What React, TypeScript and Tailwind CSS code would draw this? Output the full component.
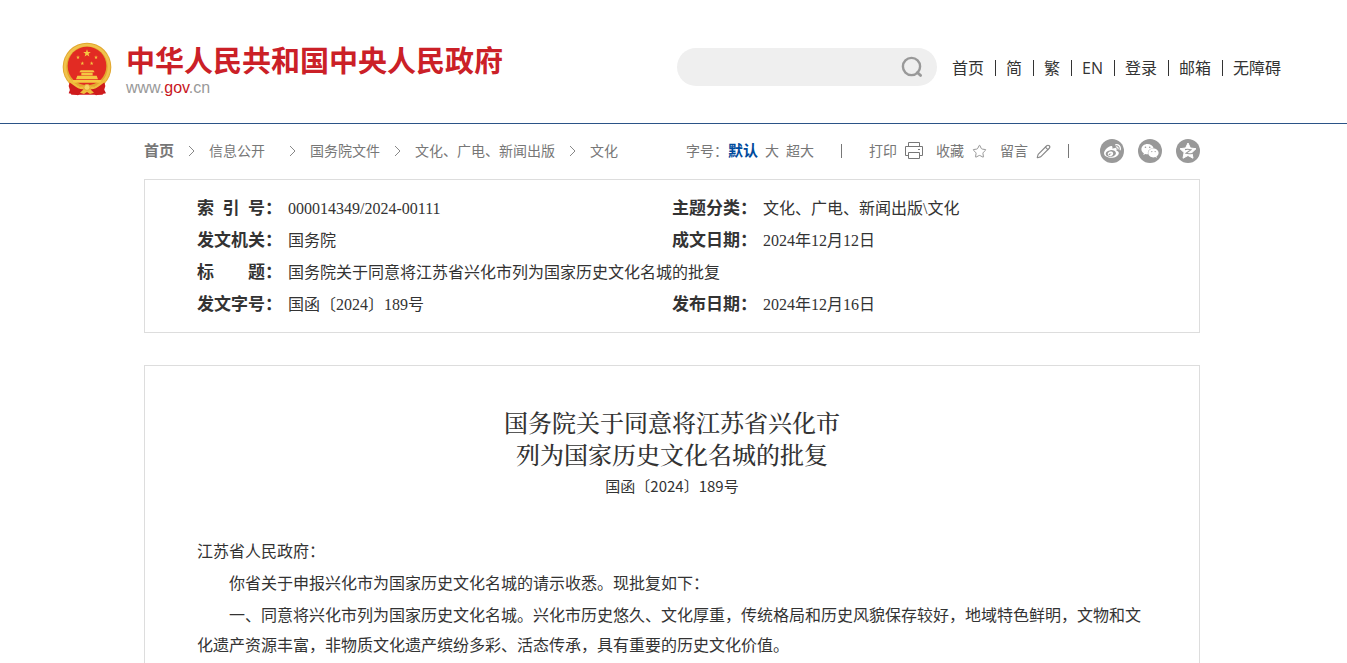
import { Fragment, useState } from 'react'
import { Pencil, Star } from 'lucide-react'
import { FaWeibo, FaWeixin } from 'react-icons/fa'

const navLinks = ['首页', '简', '繁', 'EN', '登录', '邮箱', '无障碍']

const crumbs = [
  { text: '首页', cls: 'text-[15px] font-bold' },
  { text: '信息公开', cls: 'mr-[10px]' },
  { text: '国务院文件', cls: '' },
  { text: '文化、广电、新闻出版', cls: '' },
  { text: '文化', cls: '' },
]

const sizes = ['默认', '大', '超大']

const paragraphs = [
  '你省关于申报兴化市为国家历史文化名城的请示收悉。现批复如下：',
  '一、同意将兴化市列为国家历史文化名城。兴化市历史悠久、文化厚重，传统格局和历史风貌保存较好，地域特色鲜明，文物和文化遗产资源丰富，非物质文化遗产缤纷多彩、活态传承，具有重要的历史文化价值。',
]

function Emblem() {
  const star = 'M0-10 2.4-3.2 9.5-3.1 3.8 1.2 5.9 8.1 0 4-5.9 8.1-3.8 1.2-9.5-3.1-2.4-3.2Z'
  return (
    <svg viewBox="12 12 150 162" className="h-[54px] w-[50px]" aria-hidden="true">
      <path d="M34 128 L38 150 L32 166 L60 172 L74 162 L100 162 L114 172 L144 166 L136 150 L142 128Z" fill="#c8161d" />
      <circle cx="87" cy="87" r="73" fill="#e2a72e" />
      <circle cx="87" cy="87" r="66" fill="none" stroke="#f0c24c" strokeWidth="8" />
      <circle cx="87" cy="84" r="58" fill="#e22b23" />
      <g fill="#f5c842">
        <path d={star} transform="translate(87 46) scale(1.2)" />
        <path d={star} transform="translate(60 58) scale(.6)" />
        <path d={star} transform="translate(114 58) scale(.6)" />
        <path d={star} transform="translate(73 76) scale(.6)" />
        <path d={star} transform="translate(101 76) scale(.6)" />
        <path d="M68 97h38l4 6h-46zM70 104h34v8h-34zM58 113h58l4 11H54zM42 126h90l-5 8H47z" />
      </g>
      <path d="M36 130 C50 136 62 150 87 150 C112 150 124 136 138 130 L142 144 L134 170 L40 170 L32 144Z" fill="#cf1b1c" />
      <path d="M32 128 C48 134 54 150 74 150 L87 142 L100 150 C120 150 126 134 142 128" fill="none" stroke="#efbd3d" strokeWidth="7" />
      <path d="M66 164 Q76 158 78 150 L96 150 Q98 158 108 164 L96 168 L87 162 L78 168Z" fill="#efbd3d" />
      <circle cx="87" cy="148" r="9" fill="#f7d365" stroke="#d9962a" strokeWidth="2" />
    </svg>
  )
}

function SearchIcon() {
  return (
    <svg viewBox="0 0 22 22" className="h-[22px] w-[22px]" fill="none" stroke="#999" strokeWidth="2.4" strokeLinecap="round">
      <circle cx="10.5" cy="10.5" r="8.6" />
      <path d="M16.4 16.4 L19.6 19.6" strokeWidth="2.8" />
    </svg>
  )
}

function PrinterIcon() {
  return (
    <svg viewBox="0 0 18 18" className="h-[18px] w-[18px]" fill="none" stroke="#777">
      <path d="M3.5 4.5V.5h11v4M3.5 13.5H.5v-9h17v9h-3M3.5 10.5h11v6h-11zM13 7.5h2" />
    </svg>
  )
}

function QzoneIcon() {
  return (
    <svg viewBox="0 0 18 18" className="h-[18px] w-[18px]">
      <path d="M9 1 11.4 6 17 6.7 12.9 10.6 14 16.2 9 13.5 4 16.2 5.1 10.6 1 6.7 6.6 6Z" fill="#fff" stroke="#fff" strokeLinejoin="round" />
      <path d="M6 7.6 Q9 7 12 7.7 L7 11.3 Q10 12.2 14 11.2" fill="none" stroke="#999" strokeWidth="1.1" />
    </svg>
  )
}

function Chevron() {
  return (
    <svg viewBox="0 0 7 12" className="mx-[14px] h-3 w-[7px] shrink-0" fill="none" stroke="#888">
      <path d="M1 1 6 6 1 11" />
    </svg>
  )
}

function Label({ text }: { text: string }) {
  return (
    <th scope="row" className="p-0 text-left text-[17px] font-bold">
      <span className="flex">
        <span className="flex w-[68px] justify-between">
          {text.split('').map((c, i) => <span key={i}>{c}</span>)}
        </span>
        ：
      </span>
    </th>
  )
}

export default function App() {
  const [size, setSize] = useState('默认')
  const [keyword, setKeyword] = useState('')

  return (
    <div className="flex min-h-screen flex-col bg-white font-['Open_Sans','Noto_Sans_CJK_SC',sans-serif] text-[#333]">
      <header className="border-b border-[#2b5487]">
        <div className="mx-auto flex h-[123px] max-w-[1223px] items-center justify-between pt-[11px] pr-1">
          <a href="#" className="flex gap-[14px] pt-1">
            <Emblem />
            <span className="flex flex-col">
              <span className="text-[29px] leading-[38px] font-bold whitespace-nowrap text-[#cb2027]">中华人民共和国中央人民政府</span>
              <span className="font-['Liberation_Sans',sans-serif] text-base leading-4 text-[#999]">
                www.<span className="text-[#c8161d]">gov</span>.cn
              </span>
            </span>
          </a>

          <div className="flex items-center gap-[15px]">
            <form className="flex h-[38px] w-[260px] items-center rounded-full bg-[#efefef] pr-[14px] pl-4" onSubmit={e => e.preventDefault()}>
              <input type="text" aria-label="搜索" value={keyword} onChange={e => setKeyword(e.target.value)}
                className="min-w-0 flex-1 bg-transparent text-sm outline-none" />
              <button type="submit" aria-label="搜索" className="cursor-pointer"><SearchIcon /></button>
            </form>
            <nav className="flex items-center pt-[2px] text-base whitespace-nowrap">
              {navLinks.map((t, i) => (
                <Fragment key={t}>
                  {i > 0 && <span className="mr-[10px] ml-[11px] h-4 w-px bg-[#333]" />}
                  <a href="#">{t}</a>
                </Fragment>
              ))}
            </nav>
          </div>
        </div>
      </header>

      <main className="mx-auto flex w-full max-w-[1059px] flex-1 flex-col pr-[3px]">
        <div className="mb-px flex h-[54px] items-center justify-between text-sm whitespace-nowrap text-[#777]">
          <nav className="flex items-center">
            {crumbs.map((c, i) => (
              <Fragment key={c.text}>
                {i > 0 && <Chevron />}
                <a href="#" className={c.cls}>{c.text}</a>
              </Fragment>
            ))}
          </nav>

          <div className="flex items-center">
            <span>字号：</span>
            <div className="flex items-center gap-[7px]">
              {sizes.map(s => (
                <button key={s} onClick={() => setSize(s)}
                  className={`cursor-pointer ${s === size ? 'text-[15px] font-bold text-[#004a9c]' : ''}`}>
                  {s}
                </button>
              ))}
            </div>
            <span className="mx-[27px] h-[14px] w-px bg-[#777]" />
            <div className="flex items-center gap-[13px]">
              <button className="flex cursor-pointer items-center gap-2">打印<PrinterIcon /></button>
              <button className="flex cursor-pointer items-center gap-2">收藏<Star size={15} strokeWidth={1.4} color="#888" /></button>
              <button className="flex cursor-pointer items-center gap-2">留言<Pencil size={15} strokeWidth={1.8} color="#888" /></button>
            </div>
            <span className="mr-[31px] ml-[17px] h-[14px] w-px bg-[#777]" />
            <div className="flex items-center gap-[14px]">
              <a href="#" aria-label="微博" className="flex size-6 items-center justify-center rounded-full bg-[#999] text-white"><FaWeibo size={17} /></a>
              <a href="#" aria-label="微信" className="flex size-6 items-center justify-center rounded-full bg-[#999] text-white"><FaWeixin size={18} /></a>
              <a href="#" aria-label="QQ空间" className="flex size-6 items-center justify-center rounded-full bg-[#999] text-white"><QzoneIcon /></a>
            </div>
          </div>
        </div>

        <section className="border border-[#ddd] px-[52px] pt-[13px] pb-[11px]">
          <table className="w-full table-fixed font-['Liberation_Serif','Noto_Sans_CJK_SC',serif] text-base leading-8">
            <colgroup>
              <col className="w-[91px]" />
              <col className="w-[384px]" />
              <col className="w-[91px]" />
              <col />
            </colgroup>
            <tbody>
              <tr>
                <Label text="索引号" />
                <td className="p-0">000014349/2024-00111</td>
                <Label text="主题分类" />
                <td className="p-0">文化、广电、新闻出版\文化</td>
              </tr>
              <tr>
                <Label text="发文机关" />
                <td className="p-0">国务院</td>
                <Label text="成文日期" />
                <td className="p-0">2024年12月12日</td>
              </tr>
              <tr>
                <Label text="标题" />
                <td className="p-0 whitespace-nowrap" colSpan={3}>国务院关于同意将江苏省兴化市列为国家历史文化名城的批复</td>
              </tr>
              <tr>
                <Label text="发文字号" />
                <td className="p-0">国函〔2024〕189号</td>
                <Label text="发布日期" />
                <td className="p-0">2024年12月16日</td>
              </tr>
            </tbody>
          </table>
        </section>

        <article className="mt-8 flex-1 border border-b-0 border-[#ddd] px-[52px] pt-10">
          <h1 className="text-center font-['Noto_Serif_CJK_SC','Noto_Sans_CJK_SC',serif] text-2xl leading-8 font-medium">
            国务院关于同意将江苏省兴化市<br />列为国家历史文化名城的批复
          </h1>
          <p className="text-center font-['Noto_Sans_CJK_SC',sans-serif] text-[15px] leading-8">国函〔2024〕189号</p>
          <div className="mt-[33px] space-y-[2px] font-['Noto_Sans_CJK_SC',sans-serif] text-base leading-[30px]">
            <p>江苏省人民政府：</p>
            {paragraphs.map(p => <p key={p} className="indent-8">{p}</p>)}
          </div>
        </article>
      </main>
    </div>
  )
}
